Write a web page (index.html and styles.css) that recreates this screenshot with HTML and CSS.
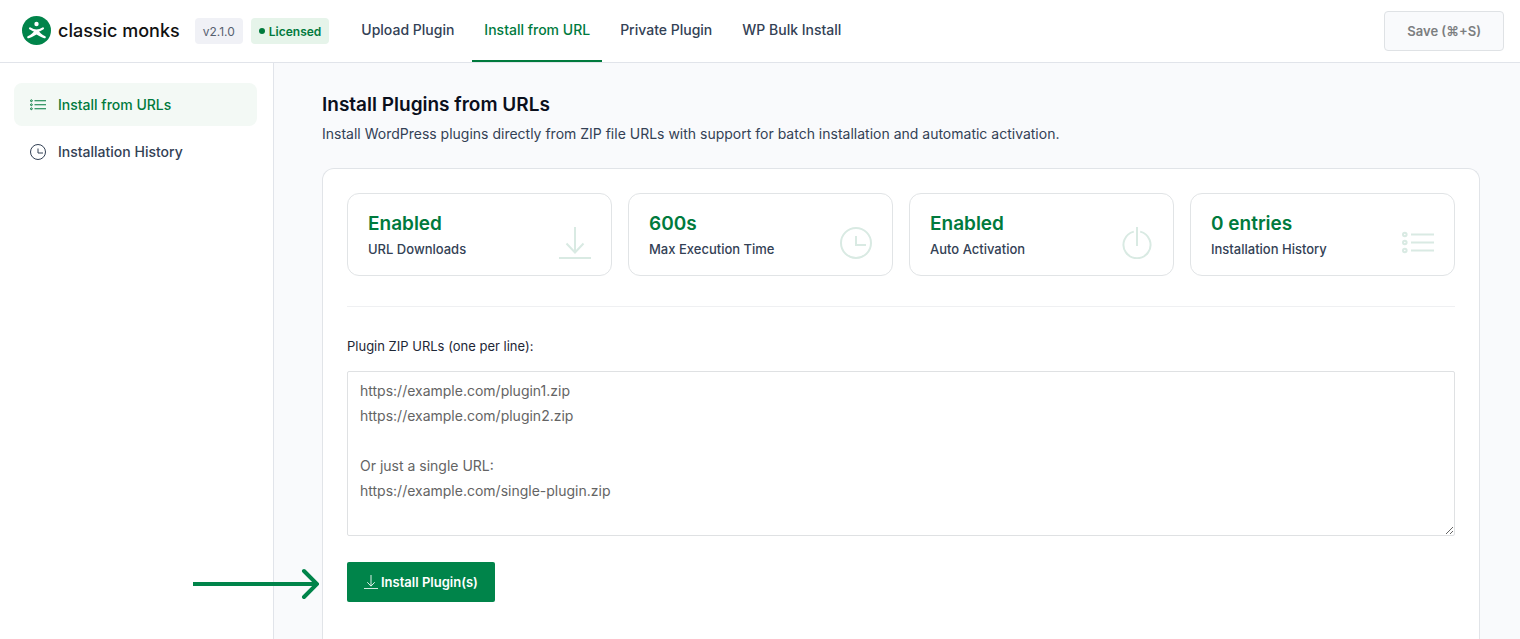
FILE: index.html
```html
<!DOCTYPE html>
<html lang="en">
<head>
<meta charset="utf-8">
<title>Install Plugins from URLs – Classic Monks</title>
<link rel="stylesheet" href="styles.css">
</head>
<body>
<svg class="sprite" aria-hidden="true">
  <symbol id="icon-list" viewBox="0 0 32 32">
    <g fill="none" stroke="currentColor" stroke-width="2">
      <circle cx="2.8" cy="7.500" r="1.800"/><circle cx="2.8" cy="15.500" r="1.800"/><circle cx="2.8" cy="23.500" r="1.800"/>
      <path d="M9 7.500h23M9 15.500h23M9 23.500h23"/>
    </g>
  </symbol>
  <symbol id="icon-clock" viewBox="0 0 32 32">
    <g fill="none" stroke="currentColor" stroke-width="2">
      <circle cx="16" cy="16" r="15"/><path d="M16 9v9h10"/>
    </g>
  </symbol>
  <symbol id="icon-download" viewBox="0 0 32 32">
    <path d="M16 0v25M7.500 16.500L16 25.500l8.500-9M0 31h32" fill="none" stroke="currentColor" stroke-width="2"/>
  </symbol>
  <symbol id="icon-power" viewBox="0 0 32 32">
    <path d="M16 0v19M12.800 4.600a13.500 13.500 0 1 0 6.400 0" fill="none" stroke="currentColor" stroke-width="2"/>
  </symbol>
</svg>

<header class="topbar">
  <a class="brand" href="#">
    <svg class="brand-mark" viewBox="0 0 30 30" aria-hidden="true">
      <circle cx="14.500" cy="14.500" r="14.500" fill="#00844a"/>
      <circle cx="14.500" cy="8" r="2.200" fill="#fff"/>
      <path d="M8 12.300q6.500 4.600 13 0" fill="none" stroke="#fff" stroke-width="2.100" stroke-linecap="round"/>
      <path d="M12.500 14h4q1.500 4 6.800 6.200 .9 .6 .4 1.500-.5 .7-1.500 .5-3.600-1-7.700-3.600-4.100 2.600-7.700 3.600-1 .2-1.500-.5-.5-.9 .4-1.500Q11 18 12.500 14z" fill="#fff"/>
    </svg>
    <span class="brand-name">classic monks</span>
  </a>
  <span class="badge">v2.1.0</span>
  <span class="badge badge-licensed"><span class="dot"></span>Licensed</span>
  <nav class="tabs" aria-label="Sections">
    <a class="tab" href="#">Upload Plugin</a>
    <a class="tab tab-active" href="#" aria-current="page">Install from URL</a>
    <a class="tab" href="#">Private Plugin</a>
    <a class="tab" href="#">WP Bulk Install</a>
  </nav>
  <button class="save" type="button" disabled>Save (⌘+S)</button>
</header>

<div class="layout">
  <nav class="sidebar" aria-label="Install from URL">
    <a class="side-link side-link-active" href="#" aria-current="page"><svg class="icon-small" aria-hidden="true"><use href="#icon-list"/></svg>Install from URLs</a>
    <a class="side-link" href="#"><svg class="icon-small" aria-hidden="true"><use href="#icon-clock"/></svg>Installation History</a>
  </nav>
  <main class="content">
    <h1 class="title">Install Plugins from URLs</h1>
    <p class="subtitle">Install WordPress plugins directly from ZIP file URLs with support for batch installation and automatic activation.</p>
    <section class="panel">
      <div class="stats">
        <div class="stat"><div><div class="stat-value">Enabled</div><div class="stat-label">URL Downloads</div></div><svg class="stat-icon" aria-hidden="true"><use href="#icon-download"/></svg></div>
        <div class="stat"><div><div class="stat-value">600s</div><div class="stat-label">Max Execution Time</div></div><svg class="stat-icon" aria-hidden="true"><use href="#icon-clock"/></svg></div>
        <div class="stat"><div><div class="stat-value">Enabled</div><div class="stat-label">Auto Activation</div></div><svg class="stat-icon" aria-hidden="true"><use href="#icon-power"/></svg></div>
        <div class="stat"><div><div class="stat-value">0 entries</div><div class="stat-label">Installation History</div></div><svg class="stat-icon" aria-hidden="true"><use href="#icon-list"/></svg></div>
      </div>
      <form class="install-form">
        <label class="field-label" for="plugin-urls">Plugin ZIP URLs (one per line):</label>
        <textarea class="urls" id="plugin-urls" rows="6" placeholder="https://example.com/plugin1.zip
https://example.com/plugin2.zip

Or just a single URL:
https://example.com/single-plugin.zip"></textarea>
        <div class="actions">
          <svg class="pointer" viewBox="0 0 126 32" aria-hidden="true"><path d="M0 16h123" stroke-width="4"/><path d="M111 3l13 13-13 13" stroke-width="4" stroke-linecap="round"/></svg>
          <button class="install" type="button"><svg class="install-icon" aria-hidden="true"><use href="#icon-download"/></svg>Install Plugin(s)</button>
        </div>
      </form>
    </section>
  </main>
</div>
</body>
</html>
```
FILE: styles.css
```css
* { box-sizing: border-box; }

body {
  display: flex;
  flex-direction: column;
  min-height: 100vh;
  margin: 0;
  background: #f9fafc;
  color: #334155;
  font-family: Inter, "Liberation Sans", sans-serif;
  font-size: 14px;
}

a { color: inherit; text-decoration: none; }
button, textarea { font-family: inherit; }
.sprite { position: absolute; width: 0; height: 0; }

.topbar {
  display: flex;
  flex: none;
  align-items: center;
  height: 63px;
  padding: 0 16px 0 22px;
  background: #fff;
  border-bottom: 1px solid #e1e4ea;
}

.brand { display: flex; align-items: center; gap: 6px; margin-right: 15px; }
.brand-mark { width: 30px; height: 30px; }
.brand-name { color: #111; font-size: 18px; font-weight: 500; line-height: 24px; white-space: nowrap; }

.badge {
  display: flex;
  align-items: center;
  height: 26px;
  margin-right: 8px;
  padding: 0 8px;
  border-radius: 4px;
  background: #f0f1f6;
  color: #56606f;
  font-size: 12px;
}
.badge-licensed { margin-right: 20px; gap: 4px; background: #e6f4ea; color: #007a3d; font-weight: 600; }
.dot { width: 6px; height: 6px; border-radius: 50%; background: currentColor; }

.tabs { display: flex; align-self: stretch; gap: 6px; }
.tab {
  padding: 19px 12px 0;
  border-bottom: 2px solid transparent;
  font-size: 14px;
  font-weight: 500;
  line-height: 22px;
  white-space: nowrap;
}
.tab-active { border-color: #007a3d; color: #007a3d; }

.save {
  height: 40px;
  margin-left: auto;
  padding: 0 22px;
  border: 1px solid #dfe2e5;
  border-radius: 4px;
  background: #f9fafc;
  color: #7c7e80;
  font-size: 13px;
  font-weight: 600;
}

.layout { display: flex; flex: 1; }

.sidebar {
  display: flex;
  flex: none;
  flex-direction: column;
  gap: 4px;
  width: 274px;
  padding: 20px 16px 0 14px;
  background: #fff;
  border-right: 1px solid #e1e4ea;
}
.side-link {
  display: flex;
  align-items: center;
  gap: 12px;
  height: 43px;
  padding: 0 16px;
  border-radius: 8px;
  font-weight: 500;
}
.side-link-active { background: #f3f9f5; color: #007a3d; }
.icon-small { width: 16px; height: 16px; }

.content {
  display: flex;
  flex: 1;
  flex-direction: column;
  min-width: 0;
  padding: 28px 40px 0 48px;
}
.title { margin: 0; color: #0a0f1c; font-size: 19px; font-weight: 600; line-height: 28px; }
.subtitle { margin: 4px 0 24px; line-height: 21px; }

.panel {
  flex: 1;
  padding: 24px;
  background: #fff;
  border: 1px solid #e1e4e8;
  border-bottom: 0;
  border-radius: 12px 12px 0 0;
}

.stats {
  display: grid;
  grid-template-columns: repeat(4, 1fr);
  gap: 16px;
  padding-bottom: 30px;
  border-bottom: 1px solid #eff0f2;
}
.stat {
  display: flex;
  align-items: flex-end;
  justify-content: space-between;
  height: 83px;
  padding: 14px 20px 16px;
  border: 1px solid #e1e4e6;
  border-radius: 12px;
}
.stat-value { color: #007a3d; font-size: 19px; font-weight: 600; line-height: 30px; }
.stat-label { font-size: 13px; font-weight: 500; line-height: 20px; }
.stat-icon { width: 32px; height: 32px; color: #d9eae3; }

.install-form { padding-top: 29px; }
.field-label { display: block; margin-bottom: 15px; color: #1e2736; font-size: 13px; line-height: 20px; }
.urls {
  display: block;
  width: 100%;
  padding: 6px 12px 7px;
  border: 1px solid #dfe1e3;
  border-radius: 2px;
  background: #fff;
  color: #334155;
  font-size: 14px;
  line-height: 25px;
}
.urls::placeholder { color: #646464; }

.actions { position: relative; display: flex; margin-top: 26px; }
.install {
  display: flex;
  align-items: center;
  gap: 3px;
  height: 40px;
  padding: 0 17px;
  border: 0;
  border-radius: 2px;
  background: #00844a;
  color: #fff;
  font-size: 13px;
  font-weight: 600;
}
.install-icon { width: 14px; height: 14px; }

/* Callout arrow drawn over the sidebar edge, pointing at the button. */
.pointer {
  position: absolute;
  top: 6px;
  right: calc(100% + 28px);
  width: 126px;
  height: 32px;
  fill: none;
  stroke: #00844a;
}
```
